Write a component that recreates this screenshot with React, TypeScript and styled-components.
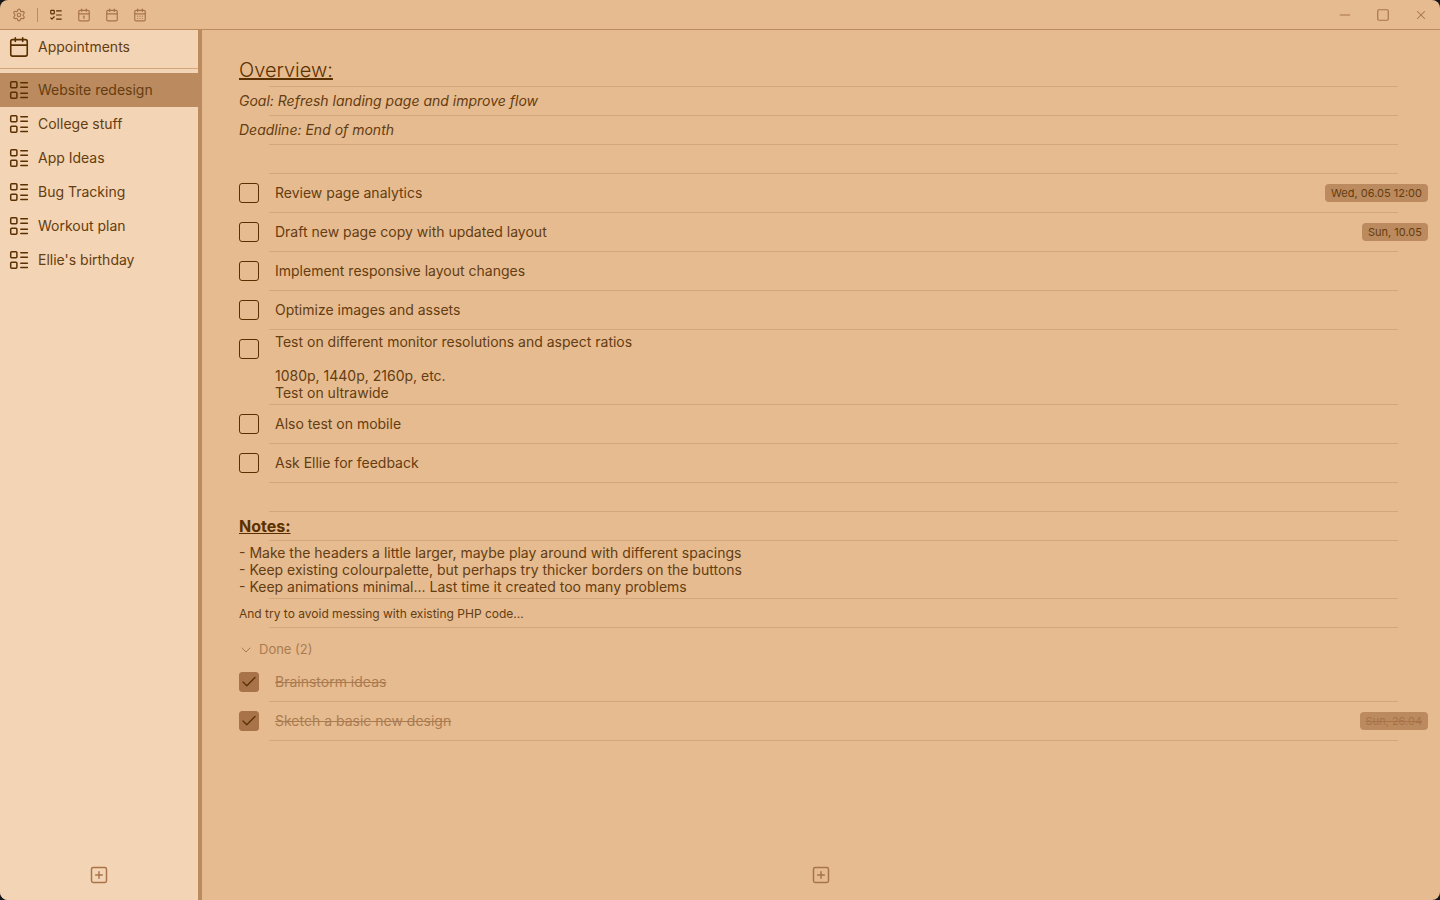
import React, { useState } from "react";
import styled, { createGlobalStyle, css } from "styled-components";
import {
  Calendar,
  Calendar1,
  CalendarDays,
  Check,
  ChevronDown,
  ListTodo,
  Minus,
  Settings,
  Square,
  SquarePlus,
  X,
} from "lucide-react";

const color = {
  backdrop: "#14161a",
  main: "#e6bb90",
  side: "#f3d4b4",
  accent: "#bb8a5e",
  line: "#d3a67b",
  ink: "#5a3000",
  text: "#643d10",
  muted: "#a87349",
  faded: "#aa7b50",
};

const GlobalStyle = createGlobalStyle`
  *, *::before, *::after { box-sizing: border-box; }
  body {
    margin: 0;
    background: ${color.backdrop};
    color: ${color.text};
    font-family: Inter, "Liberation Sans", sans-serif;
    font-size: 14px;
    font-weight: 400;
    line-height: 17px;
  }
  button {
    margin: 0;
    padding: 0;
    border: 0;
    background: none;
    color: inherit;
    font: inherit;
    cursor: pointer;
  }
  ul { margin: 0; padding: 0; list-style: none; }
`;

const Window = styled.div`
  display: flex;
  flex-direction: column;
  min-height: 100vh;
  overflow: hidden;
  border-radius: 8px;
  background: ${color.main};
`;

const TitleBar = styled.header`
  display: flex;
  justify-content: space-between;
  height: 30px;
  border-bottom: 1px solid ${color.accent};
`;

const ViewButtons = styled.nav`
  display: flex;
  align-items: center;
  padding-left: 5px;
`;

const IconButton = styled.button<{ $active?: boolean; $wide?: boolean }>`
  display: flex;
  align-items: center;
  justify-content: center;
  width: ${(p) => (p.$wide ? "38px" : "28px")};
  height: 28px;
  color: ${(p) => (p.$active ? color.ink : color.muted)};
`;

const Divider = styled.span`
  width: 1px;
  height: 14px;
  margin: 0 4px;
  background: ${color.accent};
`;

const WindowButtons = styled.div`
  display: flex;
  align-items: center;
`;

const Body = styled.div`
  display: flex;
  flex: 1;
`;

const Sidebar = styled.aside`
  display: flex;
  flex-direction: column;
  flex: 0 0 202px;
  border-right: 4px solid ${color.accent};
  background: ${color.side};
`;

const SidebarRule = styled.hr`
  width: 100%;
  height: 1px;
  margin: 4px 0;
  border: 0;
  background: ${color.line};
`;

const SideItem = styled.button<{ $selected?: boolean }>`
  display: flex;
  align-items: center;
  gap: 8px;
  width: 100%;
  height: 34px;
  padding: 0 8px;
  text-align: left;
  background: ${(p) => (p.$selected ? color.accent : "transparent")};

  svg { color: ${color.ink}; }
`;

const SideLabel = styled.span`
  padding-bottom: 1px;
`;

const AddBar = styled.footer`
  display: flex;
  justify-content: center;
  margin-top: auto;
  padding: 15px 0;
  color: ${color.muted};
`;

const AddButton = styled.button`
  display: flex;
`;

const Page = styled.main`
  display: flex;
  flex-direction: column;
  flex: 1;
  min-width: 0;
  padding-top: 24px;
`;

const Entry = styled.li`
  &::after {
    content: "";
    display: block;
    height: 1px;
    margin: 0 42px 0 67px;
    background: ${color.line};
  }
`;

type TextKind = "heading" | "bold" | "italic" | "plain" | "small";

const textKinds = {
  heading: css`
    min-height: 32px;
    color: ${color.ink};
    font-size: 20px;
    font-weight: 350;
    line-height: 24px;
    text-decoration: underline;
  `,
  bold: css`
    color: ${color.ink};
    font-size: 16px;
    font-weight: 700;
    text-decoration: underline;
  `,
  italic: css`
    padding-bottom: 4px;
    font-style: italic;
  `,
  plain: css``,
  small: css`
    font-size: 12px;
  `,
};

const TextLine = styled.div<{ $kind: TextKind }>`
  display: flex;
  align-items: center;
  min-height: 28px;
  padding: 3px 12px 3px 37px;
  white-space: pre-line;
  ${(p) => textKinds[p.$kind]}
`;

const TaskLine = styled.div`
  display: flex;
  align-items: flex-start;
  gap: 16px;
  padding: 0 12px 0 37px;
`;

const TickBox = styled.span`
  display: grid;
  flex: none;
  width: 20px;
  height: 20px;
  margin: 9px 0;
  place-items: center;

  > * { grid-area: 1 / 1; }
  svg { color: ${color.ink}; pointer-events: none; }
`;

const Tick = styled.input`
  appearance: none;
  width: 20px;
  height: 20px;
  margin: 0;
  border: 1px solid ${color.ink};
  border-radius: 3px;

  &:checked {
    border-color: ${color.muted};
    background: ${color.muted};
  }
`;

const TaskText = styled.label<{ $done?: boolean; $multiline?: boolean }>`
  display: flex;
  flex: 1;
  align-items: center;
  min-height: 38px;
  padding: 3px 0 ${(p) => (p.$multiline ? "3px" : "4px")};
  white-space: pre-line;
  ${(p) => p.$done && css`
    color: ${color.faded};
    text-decoration: line-through;
  `}
`;

const DueDate = styled.time<{ $done?: boolean }>`
  margin: 10px 0;
  padding: 0 6px;
  border-radius: 4px;
  background: ${color.accent};
  font-size: 11px;
  line-height: 18px;
  ${(p) => p.$done && css`
    color: ${color.muted};
    text-decoration: line-through;
  `}
`;

const DoneToggle = styled.button`
  display: flex;
  align-items: center;
  gap: 5px;
  margin: 10px 0 2px 36px;
  height: 23px;
  color: ${color.faded};
  font-size: 13px;
`;

function ListIcon() {
  return (
    <svg width="22" height="22" viewBox="0 0 22 22" fill="none" stroke="currentColor" strokeWidth="1.5" strokeLinecap="round">
      <rect x="2.7" y="2.7" width="6.2" height="6" rx="1" />
      <rect x="2.7" y="13.2" width="6.2" height="6" rx="1" />
      <path d="M12.8 3.8h6.6M12.8 8.3h6.6M12.8 14.2h6.6M12.8 18.5h6.6" />
    </svg>
  );
}

type Item =
  | { type: "text"; kind: TextKind; text: string }
  | { type: "task"; text: string; due?: string; done?: boolean };

const lists = ["Website redesign", "College stuff", "App Ideas", "Bug Tracking", "Workout plan", "Ellie's birthday"];

const openItems: Item[] = [
  { type: "text", kind: "heading", text: "Overview:" },
  { type: "text", kind: "italic", text: "Goal: Refresh landing page and improve flow" },
  { type: "text", kind: "italic", text: "Deadline: End of month" },
  { type: "text", kind: "plain", text: "" },
  { type: "task", text: "Review page analytics", due: "Wed, 06.05 12:00" },
  { type: "task", text: "Draft new page copy with updated layout", due: "Sun, 10.05" },
  { type: "task", text: "Implement responsive layout changes" },
  { type: "task", text: "Optimize images and assets" },
  {
    type: "task",
    text: "Test on different monitor resolutions and aspect ratios\n\n1080p, 1440p, 2160p, etc.\nTest on ultrawide",
  },
  { type: "task", text: "Also test on mobile" },
  { type: "task", text: "Ask Ellie for feedback" },
  { type: "text", kind: "plain", text: "" },
  { type: "text", kind: "bold", text: "Notes:" },
  {
    type: "text",
    kind: "plain",
    text:
      "- Make the headers a little larger, maybe play around with different spacings\n" +
      "- Keep existing colourpalette, but perhaps try thicker borders on the buttons\n" +
      "- Keep animations minimal... Last time it created too many problems",
  },
  { type: "text", kind: "small", text: "And try to avoid messing with existing PHP code..." },
];

const doneItems: Item[] = [
  { type: "task", text: "Brainstorm ideas", done: true },
  { type: "task", text: "Sketch a basic new design", due: "Sun, 26.04", done: true },
];

function ListEntry({ item, id }: { item: Item; id: string }) {
  if (item.type === "text") {
    return (
      <Entry>
        <TextLine $kind={item.kind}>{item.text}</TextLine>
      </Entry>
    );
  }
  return (
    <Entry>
      <TaskLine>
        <TickBox>
          <Tick type="checkbox" id={id} defaultChecked={item.done} />
          {item.done && <Check size={18} strokeWidth={1.75} />}
        </TickBox>
        <TaskText htmlFor={id} $done={item.done} $multiline={item.text.includes("\n")}>{item.text}</TaskText>
        {item.due && <DueDate $done={item.done}>{item.due}</DueDate>}
      </TaskLine>
    </Entry>
  );
}

export default function App() {
  const [selected, setSelected] = useState(lists[0]);
  const [showDone, setShowDone] = useState(true);

  return (
    <>
      <GlobalStyle />
      <Window>
        <TitleBar>
          <ViewButtons>
            <IconButton aria-label="Settings"><Settings size={14} /></IconButton>
            <Divider />
            <IconButton aria-label="Lists" $active><ListTodo size={14} /></IconButton>
            <IconButton aria-label="Day"><Calendar1 size={14} /></IconButton>
            <IconButton aria-label="Week"><Calendar size={14} /></IconButton>
            <IconButton aria-label="Month"><CalendarDays size={14} /></IconButton>
          </ViewButtons>
          <WindowButtons>
            <IconButton aria-label="Minimize" $wide><Minus size={16} strokeWidth={1.75} /></IconButton>
            <IconButton aria-label="Maximize" $wide><Square size={14} strokeWidth={2} /></IconButton>
            <IconButton aria-label="Close" $wide><X size={14} strokeWidth={1.75} /></IconButton>
          </WindowButtons>
        </TitleBar>
        <Body>
          <Sidebar>
            <SideItem><Calendar size={22} strokeWidth={1.75} /><SideLabel>Appointments</SideLabel></SideItem>
            <SidebarRule />
            <ul>
              {lists.map((name) => (
                <li key={name}>
                  <SideItem $selected={name === selected} onClick={() => setSelected(name)}>
                    <ListIcon />
                    <SideLabel>{name}</SideLabel>
                  </SideItem>
                </li>
              ))}
            </ul>
            <AddBar>
              <AddButton aria-label="Add list"><SquarePlus size={20} strokeWidth={1.75} /></AddButton>
            </AddBar>
          </Sidebar>
          <Page>
            <ul>
              {openItems.map((item, i) => <ListEntry key={i} item={item} id={`open-${i}`} />)}
            </ul>
            <div>
              <DoneToggle aria-expanded={showDone} onClick={() => setShowDone(!showDone)}>
                <ChevronDown size={16} strokeWidth={1.5} />
                Done (2)
              </DoneToggle>
            </div>
            {showDone && (
              <ul>
                {doneItems.map((item, i) => <ListEntry key={i} item={item} id={`done-${i}`} />)}
              </ul>
            )}
            <AddBar>
              <AddButton aria-label="Add entry"><SquarePlus size={20} strokeWidth={1.75} /></AddButton>
            </AddBar>
          </Page>
        </Body>
      </Window>
    </>
  );
}
